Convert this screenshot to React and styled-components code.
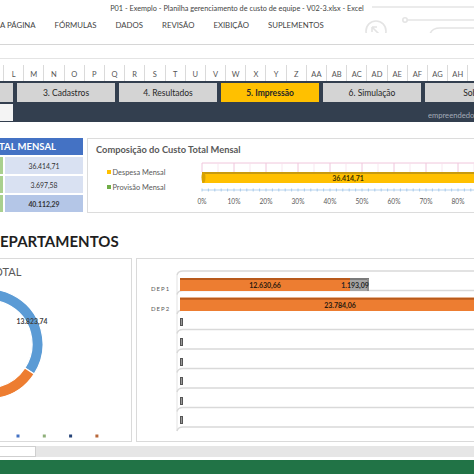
import React from "react";
import styled, { createGlobalStyle } from "styled-components";

const COLUMNS = [
  "L", "M", "N", "O", "P", "Q", "R", "S", "T", "U", "V", "W",
  "X", "Y", "Z", "AA", "AB", "AC", "AD", "AE", "AF", "AG", "AH", "AI",
];

const RIBBON_TABS = ["A PÁGINA", "FÓRMULAS", "DADOS", "REVISÃO", "EXIBIÇÃO", "SUPLEMENTOS"];

const NAV = [
  { label: "", width: 13 },
  { label: "3. Cadastros" },
  { label: "4. Resultados" },
  { label: "5. Impressão", active: true },
  { label: "6. Simulação" },
  { label: "Sobre" },
];

const TOTALS = [
  { value: "36.414,71" },
  { value: "3.697,58" },
  { value: "40.112,29", total: true },
];

function arcPath(cx, cy, R, r, a0, a1) {
  const rad = (d) => (d * Math.PI) / 180;
  const pt = (rr, a) => [cx + rr * Math.cos(rad(a)), cy + rr * Math.sin(rad(a))];
  const [x0, y0] = pt(R, a0);
  const [x1, y1] = pt(R, a1);
  const [x2, y2] = pt(r, a1);
  const [x3, y3] = pt(r, a0);
  const large = a1 - a0 > 180 ? 1 : 0;
  return `M${x0} ${y0} A${R} ${R} 0 ${large} 1 ${x1} ${y1} L${x2} ${y2} A${r} ${r} 0 ${large} 0 ${x3} ${y3} Z`;
}

function TitleDecoration() {
  return (
    <Decoration width="114" height="33" viewBox="0 0 114 33">
      <g fill="none" stroke="#e4e4e4" strokeWidth="1.6">
        <path d="M12 7 H114" />
        <circle cx="16" cy="31" r="10" />
        <path d="M20 35 L12 27 M12 27 H17 M12 27 V32" />
        <circle cx="45" cy="20" r="2.2" />
        <path d="M47.5 20 H114" />
        <path d="M70 34 Q72 28 80 28 H114" />
      </g>
    </Decoration>
  );
}

function CompositionChart() {
  const ticks = [0, 10, 20, 30, 40, 50, 60, 70, 80, 90];
  const x0 = 7;
  const step = 32;
  const barEnd = x0 + 0.908 * step * 10;
  return (
    <ChartSvg width="290" height="56" viewBox="0 0 290 56">
      <path d={`M${x0} 7 H290`} stroke="#f0c6dc" strokeWidth="1" />
      {ticks.map((t, i) => (
        <path key={t} d={`M${x0 + i * step} 7 V16`} stroke="#f0c6dc" strokeWidth="1" />
      ))}
      {ticks.map((t, i) => (
        <path key={"m" + t} d={`M${x0 + i * step + 16} 7 V16`} stroke="#f7e1ec" strokeWidth="0.8" />
      ))}
      <rect x={x0} y="16" width={barEnd - x0} height="11" fill="#ffc000" />
      <rect x={x0} y="16" width={barEnd - x0} height="2" fill="#c79a10" />
      <rect x={barEnd} y="16" width="40" height="11" fill="#70ad47" />
      <ellipse cx={x0 + 1.5} cy="21.5" rx="2" ry="5.5" fill="#d8a200" />
      <text x="153" y="24.5" textAnchor="middle" fontSize="7" fontWeight="700" fill="#3a3000" fontFamily="Lato, sans-serif">
        36.414,71
      </text>
      <path d={`M${x0} 34 H290`} stroke="#b7d3ee" strokeWidth="1" />
      {Array.from({ length: 46 }).map((_, i) => (
        <path key={"t" + i} d={`M${x0 + i * 6.4} 32.5 V35.5`} stroke="#9cc3e6" strokeWidth="0.8" />
      ))}
      {ticks.map((t, i) => (
        <text key={"l" + t} x={x0 + i * step} y="47.5" textAnchor="middle" fontSize="6.6" fill="#595959" fontFamily="Lato, sans-serif">
          {t}%
        </text>
      ))}
    </ChartSvg>
  );
}

function DonutChart() {
  const cx = -12;
  const cy = 65;
  return (
    <svg width="131" height="161" viewBox="0 0 131 161">
      <path d={arcPath(cx, cy, 55, 44, -160, 33)} fill="#5b9bd5" stroke="#fff" strokeWidth="1.2" />
      <path d={arcPath(cx, cy, 55, 44, 33, 130)} fill="#ed7d31" stroke="#fff" strokeWidth="1.2" />
      <text x="32" y="44.5" textAnchor="middle" fontSize="6.8" fontWeight="700" fill="#404040" fontFamily="Lato, sans-serif">
        13.823,74
      </text>
      {["#4472c4", "#8fb07a", "#264478", "#b8683a"].map((c, i) => (
        <rect key={c} x={16.5 + i * 26.3} y="155.5" width="3" height="3" fill={c} />
      ))}
    </svg>
  );
}

function DepartmentChart() {
  const grid = [12, 31.5, 51, 70.5, 90, 109.5, 129, 148.5, 168];
  const zeros = [63, 83, 103, 122, 142, 161];
  return (
    <svg width="340" height="182" viewBox="0 0 340 182">
      <path d="M40 16 V172" stroke="#e3e3e3" strokeWidth="1" />
      {grid.map((y) => (
        <path key={y} d={`M40 ${y + 4} Q41 ${y} 46 ${y} H340`} fill="none" stroke="#d9d9d9" strokeWidth="1.4" />
      ))}
      <text x="14" y="31.5" fontSize="6" letterSpacing="1" fill="#595959" fontFamily="Lato, sans-serif">DEP1</text>
      <text x="14" y="51.5" fontSize="6" letterSpacing="1" fill="#595959" fontFamily="Lato, sans-serif">DEP2</text>

      <rect x="43" y="19" width="170" height="13" fill="#ed7d31" />
      <rect x="43" y="19" width="170" height="2" fill="#b85a1c" />
      <rect x="213" y="19" width="19" height="13" fill="#a5a5a5" />
      <rect x="213" y="19" width="19" height="2" fill="#7a7a7a" />
      <rect x="230" y="20" width="2" height="12" fill="#8c8c8c" />

      <rect x="43" y="38.7" width="300" height="13.3" fill="#ed7d31" />
      <rect x="43" y="38.7" width="300" height="2" fill="#b85a1c" />

      <text x="128" y="28.5" textAnchor="middle" fontSize="7" fontWeight="700" fill="#2b1a0e" fontFamily="Lato, sans-serif">12.630,66</text>
      <text x="218" y="28.5" textAnchor="middle" fontSize="7" fontWeight="700" fill="#262626" fontFamily="Lato, sans-serif">1.193,09</text>
      <text x="203" y="48.5" textAnchor="middle" fontSize="7" fontWeight="700" fill="#2b1a0e" fontFamily="Lato, sans-serif">23.784,06</text>

      {zeros.map((y) => (
        <g key={y}>
          <rect x="43" y={y - 4} width="3" height="8" fill="#555" />
          <rect x="44" y={y - 3} width="1" height="6" fill="#999" />
        </g>
      ))}
    </svg>
  );
}

export default function App() {
  return (
    <>
      <GlobalStyle />
      <Window>
        <Header>
          <TitleDecoration />
          <TitleBar>P01 - Exemplo - Planilha gerenciamento de custo de equipe - V02-3.xlsx - Excel</TitleBar>
          <RibbonTabs>
            {RIBBON_TABS.map((t) => (
              <RibbonTab key={t}>{t}</RibbonTab>
            ))}
          </RibbonTabs>
        </Header>
        <FormulaArea />
        <ColumnHeaders>
          {COLUMNS.map((c) => (
            <ColumnCell key={c}>{c}</ColumnCell>
          ))}
        </ColumnHeaders>

        <NavBand>
          <NavButtons>
            {NAV.map((n, i) => (
              <NavButton key={i} $active={n.active} $width={n.width}>
                {n.label}
              </NavButton>
            ))}
          </NavButtons>
          <NavInfo>
            <NavBox />
            <InfoText>empreendedorweb</InfoText>
          </NavInfo>
        </NavBand>

        <Sheet>
          <SummaryRow>
            <TotalTable>
              <TableHeader>TAL MENSAL</TableHeader>
              {TOTALS.map((r) => (
                <TableRow key={r.value}>
                  <Sliver />
                  <ValueCell $total={r.total}>{r.value}</ValueCell>
                </TableRow>
              ))}
            </TotalTable>
            <CompositionCard>
              <CardTitle>Composição do Custo Total Mensal</CardTitle>
              <CardBody>
                <Legend>
                  <LegendItem>
                    <Swatch $color="#ffc000" />
                    Despesa Mensal
                  </LegendItem>
                  <LegendItem>
                    <Swatch $color="#70ad47" />
                    Provisão Mensal
                  </LegendItem>
                </Legend>
                <CompositionChart />
              </CardBody>
            </CompositionCard>
          </SummaryRow>

          <Heading>EPARTAMENTOS</Heading>

          <PanelsRow>
            <DonutPanel>
              <PanelTitle>OTAL</PanelTitle>
              <DonutChart />
            </DonutPanel>
            <BarPanel>
              <DepartmentChart />
            </BarPanel>
          </PanelsRow>

          <SheetTabs>
            <SheetTabBox />
          </SheetTabs>
          <StatusBar />
        </Sheet>
      </Window>
    </>
  );
}

const GlobalStyle = createGlobalStyle`
  html, body {
    margin: 0;
    padding: 0;
    background: #fff;
  }
  body {
    width: 474px;
    height: 474px;
    overflow: hidden;
    font-family: Lato, "Liberation Sans", sans-serif;
  }
`;

const Window = styled.div`
  width: 474px;
  height: 474px;
  display: flex;
  flex-direction: column;
  overflow: hidden;
  background: #fff;
`;

const Header = styled.div`
  position: relative;
  height: 44px;
  flex-shrink: 0;
  border-bottom: 1px solid #d6d6d6;
`;

const Decoration = styled.svg`
  position: absolute;
  top: 0;
  right: 0;
  pointer-events: none;
`;

const TitleBar = styled.div`
  position: relative;
  height: 17px;
  display: flex;
  align-items: center;
  justify-content: center;
  font-size: 7.3px;
  color: #444;
  white-space: nowrap;
`;

const RibbonTabs = styled.div`
  position: relative;
  display: flex;
  gap: 19px;
  padding-top: 3px;
  font-size: 7.8px;
  color: #444;
  white-space: nowrap;
`;

const RibbonTab = styled.span`
  line-height: 10px;
`;

const FormulaArea = styled.div`
  height: 13px;
  flex-shrink: 0;
  border-bottom: 1px solid #e4e4e4;
`;

const ColumnHeaders = styled.div`
  margin-top: 6px;
  height: 16px;
  flex-shrink: 0;
  display: flex;
  padding-left: 3px;
  border-left: 0;
`;

const ColumnCell = styled.div`
  width: 20.2px;
  flex-shrink: 0;
  box-sizing: border-box;
  border-left: 1px solid #dadada;
  display: flex;
  align-items: center;
  justify-content: center;
  padding-top: 3px;
  font-size: 7.5px;
  color: #555;
`;

const NavBand = styled.div`
  flex-shrink: 0;
  background: #333f4f;
  padding: 2px 0 1px;
  display: flex;
  flex-direction: column;
  gap: 1px;
`;

const NavButtons = styled.div`
  display: flex;
  gap: 4px;
  height: 19px;
`;

const NavButton = styled.div`
  width: ${(p) => (p.$width ? p.$width : 98)}px;
  flex-shrink: 0;
  background: ${(p) => (p.$active ? "#ffc000" : "#d4d4d4")};
  display: flex;
  align-items: center;
  justify-content: center;
  font-size: 8.5px;
  font-weight: ${(p) => (p.$active ? 700 : 400)};
  color: #262626;
  white-space: nowrap;
`;

const NavInfo = styled.div`
  height: 18px;
  display: flex;
  align-items: center;
`;

const NavBox = styled.div`
  width: 13px;
  height: 17px;
  background: #f4f4f4;
`;

const InfoText = styled.div`
  margin-left: auto;
  width: 46px;
  overflow: hidden;
  white-space: nowrap;
  font-size: 7.6px;
  color: #a3abb8;
  padding-top: 5px;
`;

const Sheet = styled.div`
  flex: 1;
  display: flex;
  flex-direction: column;
  padding-top: 16px;
`;

const SummaryRow = styled.div`
  display: flex;
  gap: 4px;
  height: 75px;
  flex-shrink: 0;
`;

const TotalTable = styled.div`
  width: 83px;
  flex-shrink: 0;
  display: flex;
  flex-direction: column;
  gap: 2px;
`;

const TableHeader = styled.div`
  height: 17px;
  background: #4472c4;
  color: #fff;
  font-weight: 700;
  font-size: 9.5px;
  display: flex;
  align-items: center;
  white-space: nowrap;
  text-indent: -1px;
`;

const TableRow = styled.div`
  height: 17px;
  display: flex;
  gap: 2px;
`;

const Sliver = styled.div`
  width: 3px;
  background: #a9d08e;
`;

const ValueCell = styled.div`
  flex: 1;
  background: ${(p) => (p.$total ? "#b4c6e7" : "#d9e1f2")};
  display: flex;
  align-items: center;
  justify-content: center;
  font-size: 6.9px;
  font-weight: ${(p) => (p.$total ? 700 : 400)};
  color: #333;
`;

const CompositionCard = styled.div`
  width: 400px;
  flex-shrink: 0;
  box-sizing: border-box;
  border: 1px solid #dcdcdc;
  display: flex;
  flex-direction: column;
`;

const CardTitle = styled.div`
  padding: 5px 0 0 8px;
  line-height: 12px;
  font-size: 9.3px;
  font-weight: 700;
  color: #595959;
  white-space: nowrap;
`;

const CardBody = styled.div`
  flex: 1;
  display: flex;
`;

const Legend = styled.div`
  width: 107px;
  flex-shrink: 0;
  box-sizing: border-box;
  padding: 11px 0 0 19px;
  display: flex;
  flex-direction: column;
  gap: 5px;
`;

const LegendItem = styled.div`
  display: flex;
  align-items: center;
  gap: 2px;
  height: 10px;
  font-size: 7.4px;
  color: #595959;
  white-space: nowrap;
`;

const Swatch = styled.span`
  width: 3.5px;
  height: 3.5px;
  background: ${(p) => p.$color};
`;

const ChartSvg = styled.svg`
  flex-shrink: 0;
`;

const Heading = styled.div`
  margin-top: 19px;
  line-height: 18px;
  font-size: 15px;
  font-weight: 700;
  color: #1f1f1f;
  white-space: nowrap;
  flex-shrink: 0;
`;

const PanelsRow = styled.div`
  margin-top: 8px;
  height: 184px;
  flex-shrink: 0;
  display: flex;
  gap: 4px;
`;

const DonutPanel = styled.div`
  width: 132px;
  flex-shrink: 0;
  box-sizing: border-box;
  border: 1px solid #dadada;
  border-left: 0;
  display: flex;
  flex-direction: column;
`;

const PanelTitle = styled.div`
  padding-top: 6px;
  line-height: 14px;
  font-size: 11px;
  color: #595959;
  margin-left: -6px;
`;

const BarPanel = styled.div`
  width: 345px;
  flex-shrink: 0;
  box-sizing: border-box;
  border: 1px solid #dadada;
`;

const SheetTabs = styled.div`
  margin-top: 4px;
  height: 11px;
  flex-shrink: 0;
  background: #e6e6e6;
  display: flex;
`;

const SheetTabBox = styled.div`
  width: 36px;
  background: #fff;
  border: 1px solid #cfcfcf;
  border-left: 0;
  box-sizing: border-box;
`;

const StatusBar = styled.div`
  margin-top: 3px;
  flex: 1;
  background: #217346;
`;
